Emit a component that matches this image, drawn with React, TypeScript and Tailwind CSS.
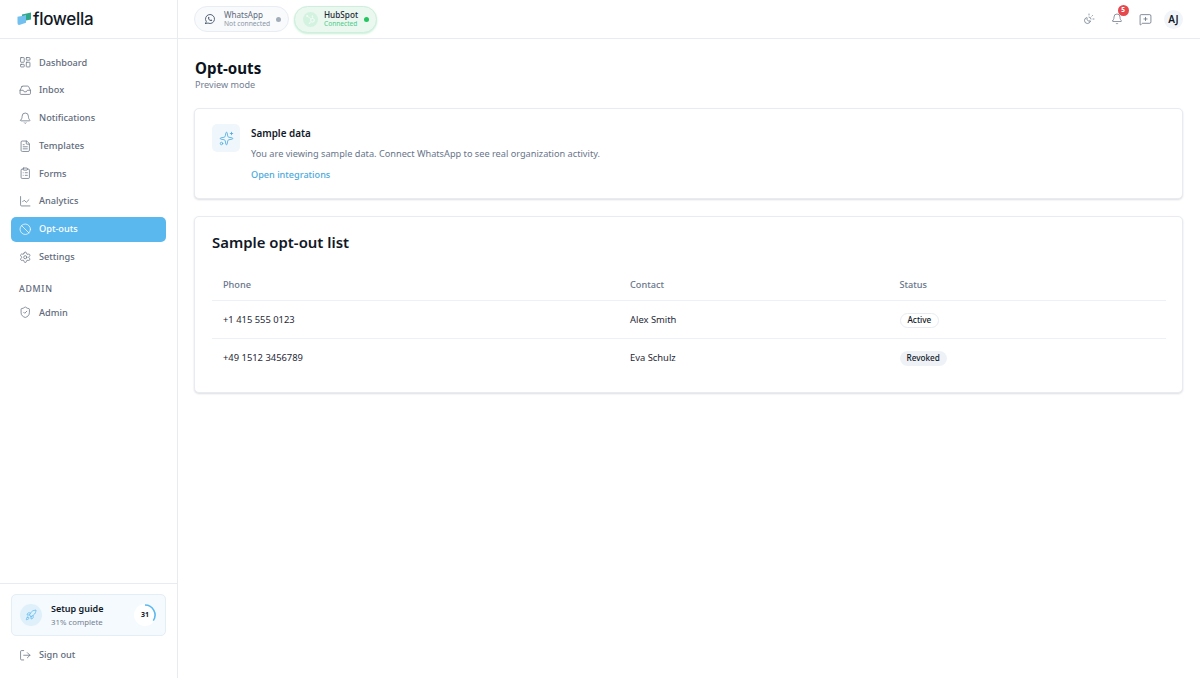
import React from "react";
import { LayoutDashboard, Inbox, Bell, FileText, ClipboardList, LineChart, Ban, Settings, ShieldCheck, Rocket, LogOut, Sparkles, MessageSquarePlus, SunMoon } from "lucide-react";
import { SiHubspot } from "react-icons/si";

const nav = [
  { label: "Dashboard", Icon: LayoutDashboard },
  { label: "Inbox", Icon: Inbox },
  { label: "Notifications", Icon: Bell },
  { label: "Templates", Icon: FileText },
  { label: "Forms", Icon: ClipboardList },
  { label: "Analytics", Icon: LineChart },
  { label: "Opt-outs", Icon: Ban, active: true },
  { label: "Settings", Icon: Settings },
];

function Item({ label, Icon, active }: { label: string; Icon: any; active?: boolean }) {
  return (
    <div className={`flex h-[25px] items-center gap-[7.5px] rounded-[5px] px-[8px] text-[9.2px] font-medium ${active ? "bg-[#5bb8ee] text-white" : "text-[#5f6b7c]"}`}>
      <Icon size={12.5} strokeWidth={1.4} />
      <span>{label}</span>
    </div>
  );
}

function Logo() {
  return (
    <svg width="15" height="14" viewBox="0 0 15 14">
      <path d="M5 2.5 L14 0.5 V7.5 L9 8.5 V3.5 L5 4.5 Z" fill="#2fa98a" />
      <path d="M0.5 4.8 L9 3.2 V10.8 L3 12.8 Q0.5 13.5 0.5 11 Z" fill="#72c0ef" />
    </svg>
  );
}

function WhatsAppIcon() {
  return (
    <svg width="12" height="12" viewBox="0 0 24 24" fill="none" stroke="#475569" strokeWidth="1.8" strokeLinecap="round" strokeLinejoin="round">
      <path d="M3 21l1.65-3.8a9 9 0 1 1 3.4 2.9L3 21" />
      <path d="M9 10a.5.5 0 0 0 1 0V9a.5.5 0 0 0-1 0v1a5 5 0 0 0 5 5h1a.5.5 0 0 0 0-1h-1a.5.5 0 0 0 0 1" />
    </svg>
  );
}

export default function App() {
  return (
    <div className="flex h-[678px] w-[1200px] overflow-hidden bg-white font-['Noto_Sans',sans-serif] text-[#0f172a]">
      <aside className="flex w-[178px] shrink-0 flex-col border-r border-[#e8ecf1]">
        <div className="flex h-[39px] shrink-0 items-center gap-[1px] border-b border-[#e8ecf1] pl-[17px]">
          <Logo />
          <span className="font-['Inter',sans-serif] text-[17px] font-medium leading-none tracking-[-0.3px] text-[#111827]">flowella</span>
        </div>
        <nav className="flex flex-col gap-[2.75px] px-[11px] pt-[11px]">
          {nav.map((n) => (
            <Item key={n.label} {...n} />
          ))}
          <div className="pb-[1px] pl-[8px] pt-[11px] text-[8.8px] font-medium tracking-[0.7px] text-[#5f6b7c]">ADMIN</div>
          <Item label="Admin" Icon={ShieldCheck} />
        </nav>
        <div className="mt-auto border-t border-[#e8ecf1] px-[11px] pb-[11px] pt-[10px]">
          <div className="flex h-[42px] items-center rounded-[5px] border border-[#e4eef6] bg-[#f4fafe] pl-[8px] pr-[9px]">
            <div className="flex h-[22px] w-[22px] items-center justify-center rounded-full bg-[#dff0fa] text-[#5bb8ee]">
              <Rocket size={12} strokeWidth={1.5} />
            </div>
            <div className="ml-[9px] flex-1 pt-[1px]">
              <div className="text-[9px] font-semibold leading-[14px] text-[#111827]">Setup guide</div>
              <div className="text-[7.8px] leading-[13px] text-[#748092]">31% complete</div>
            </div>
            <div className="relative flex h-[22px] w-[22px] items-center justify-center rounded-full bg-white">
              <svg width="22" height="22" viewBox="0 0 22 22" className="absolute inset-0">
                <path d="M11 1 A10 10 0 0 1 19.3 16.6" fill="none" stroke="#5bb8ee" strokeWidth="1.6" />
              </svg>
              <span className="text-[7px] font-bold text-[#111827]">31</span>
            </div>
          </div>
          <div className="mt-[6px] flex h-[25px] items-center gap-[7.5px] px-[8px] pt-[1px] text-[9.2px] font-medium text-[#5f6b7c]">
            <LogOut size={12.5} strokeWidth={1.4} />
            <span>Sign out</span>
          </div>
        </div>
      </aside>
      <div className="flex min-w-0 flex-1 flex-col">
        <header className="flex h-[39px] shrink-0 items-center justify-between border-b border-[#e8ecf1] pl-[16px] pr-[17px]">
          <div className="flex items-center gap-[5px]">
            <div className="flex h-[26px] w-[95px] items-center rounded-full border border-[#e8edf3] bg-[#f8fafc] pl-[9px]">
              <WhatsAppIcon />
              <div className="ml-[8px] w-[46.5px]">
                <div className="text-[8.1px] leading-[9px] text-[#5f6b7c]">WhatsApp</div>
                <div className="text-[6.7px] leading-[9px] text-[#8a95a5]">Not connected</div>
              </div>
              <span className="ml-[5px] h-[5px] w-[5px] rounded-full bg-[#a3adba]" />
            </div>
            <div className="flex h-[27px] w-[83px] items-center rounded-full border border-[#cfeedd] bg-[#eaf8f0] pl-[8px] shadow-[0_1px_2px_rgba(34,197,94,0.25)]">
              <div className="flex h-[15px] w-[15px] items-center justify-center rounded-full bg-[#d3f2df] text-[#f0fbf5]">
                <SiHubspot size={9} />
              </div>
              <div className="ml-[6px] w-[37px]">
                <div className="text-[8.2px] font-medium leading-[9px] text-[#1f2937]">HubSpot</div>
                <div className="text-[6.6px] leading-[9px] text-[#4fc98a]">Connected</div>
              </div>
              <span className="ml-[3px] h-[5px] w-[5px] rounded-full bg-[#22c55e]" />
            </div>
          </div>
          <div className="flex items-center">
            <SunMoon size={12} strokeWidth={1.4} className="mr-[16px] text-[#5f6b7c]" />
            <div className="relative mr-[16px]">
              <Bell size={12} strokeWidth={1.4} className="text-[#5f6b7c]" />
              <span className="absolute -right-[6px] -top-[8px] flex h-[11px] w-[11px] items-center justify-center rounded-full bg-[#e5484d] text-[6.5px] font-bold leading-none text-white">5</span>
            </div>
            <MessageSquarePlus size={13} strokeWidth={1.4} className="mr-[12.5px] text-[#5f6b7c]" />
            <div className="flex h-[19px] w-[19px] items-center justify-center rounded-full bg-[#f1f4f8] text-[10px] font-semibold text-[#111827]">AJ</div>
          </div>
        </header>
        <main className="flex-1 pl-[16px] pr-[17px] pt-[18px]">
          <h1 className="ml-[1px] text-[15.1px] font-bold leading-[22px] text-[#0b1220]">Opt-outs</h1>
          <p className="ml-[1px] text-[9.1px] leading-[12px] text-[#748092]">Preview mode</p>
          <section className="mt-[17px] flex h-[91px] rounded-[5px] border border-[#e8ecf1] bg-white pl-[17px] pt-[15px] shadow-[0_1px_2px_rgba(15,23,42,0.14)]">
            <div className="flex h-[28px] w-[28px] items-center justify-center rounded-[5px] bg-[#eff7fd] text-[#4aa9dc]">
              <Sparkles size={15} strokeWidth={1.3} />
            </div>
            <div className="ml-[11px]">
              <div className="text-[9.9px] font-semibold leading-[18px] text-[#111827]">Sample data</div>
              <div className="mt-[5px] text-[9.2px] leading-[14px] text-[#68758a]">You are viewing sample data. Connect WhatsApp to see real organization activity.</div>
              <div className="mt-[7px] text-[9.15px] font-medium leading-[14px] text-[#4aa9dc]">Open integrations</div>
            </div>
          </section>
          <section className="mt-[17px] h-[177px] rounded-[5px] border border-[#e8ecf1] bg-white pl-[17px] pr-[16px] pt-[14px] shadow-[0_1px_2px_rgba(15,23,42,0.14)]">
            <h2 className="text-[14.9px] font-semibold leading-[22px] text-[#111827]">Sample opt-out list</h2>
            <div className="mt-[12px] grid h-[36px] grid-cols-[407px_269.5px_1fr] items-center border-b border-[#edf0f4] px-[11px] pt-[4px] text-[9.2px] font-medium text-[#68758a]">
              <span>Phone</span>
              <span>Contact</span>
              <span>Status</span>
            </div>
            <div className="grid h-[38px] grid-cols-[407px_269.5px_1fr] items-center border-b border-[#edf0f4] px-[11px] pt-[1px] text-[9.4px] text-[#1f2937]">
              <span>+1 415 555 0123</span>
              <span>Alex Smith</span>
              <span><span className="inline-flex h-[15px] items-center rounded-full border border-[#e8ecf1] px-[7px] text-[8.2px] font-medium text-[#111827]">Active</span></span>
            </div>
            <div className="grid h-[38px] grid-cols-[407px_269.5px_1fr] items-center px-[11px] pt-[1px] text-[9.4px] text-[#1f2937]">
              <span>+49 1512 3456789</span>
              <span>Eva Schulz</span>
              <span><span className="inline-flex h-[15px] items-center rounded-full bg-[#eef2f7] px-[7px] text-[8.2px] font-medium text-[#111827]">Revoked</span></span>
            </div>
          </section>
        </main>
      </div>
    </div>
  );
}
